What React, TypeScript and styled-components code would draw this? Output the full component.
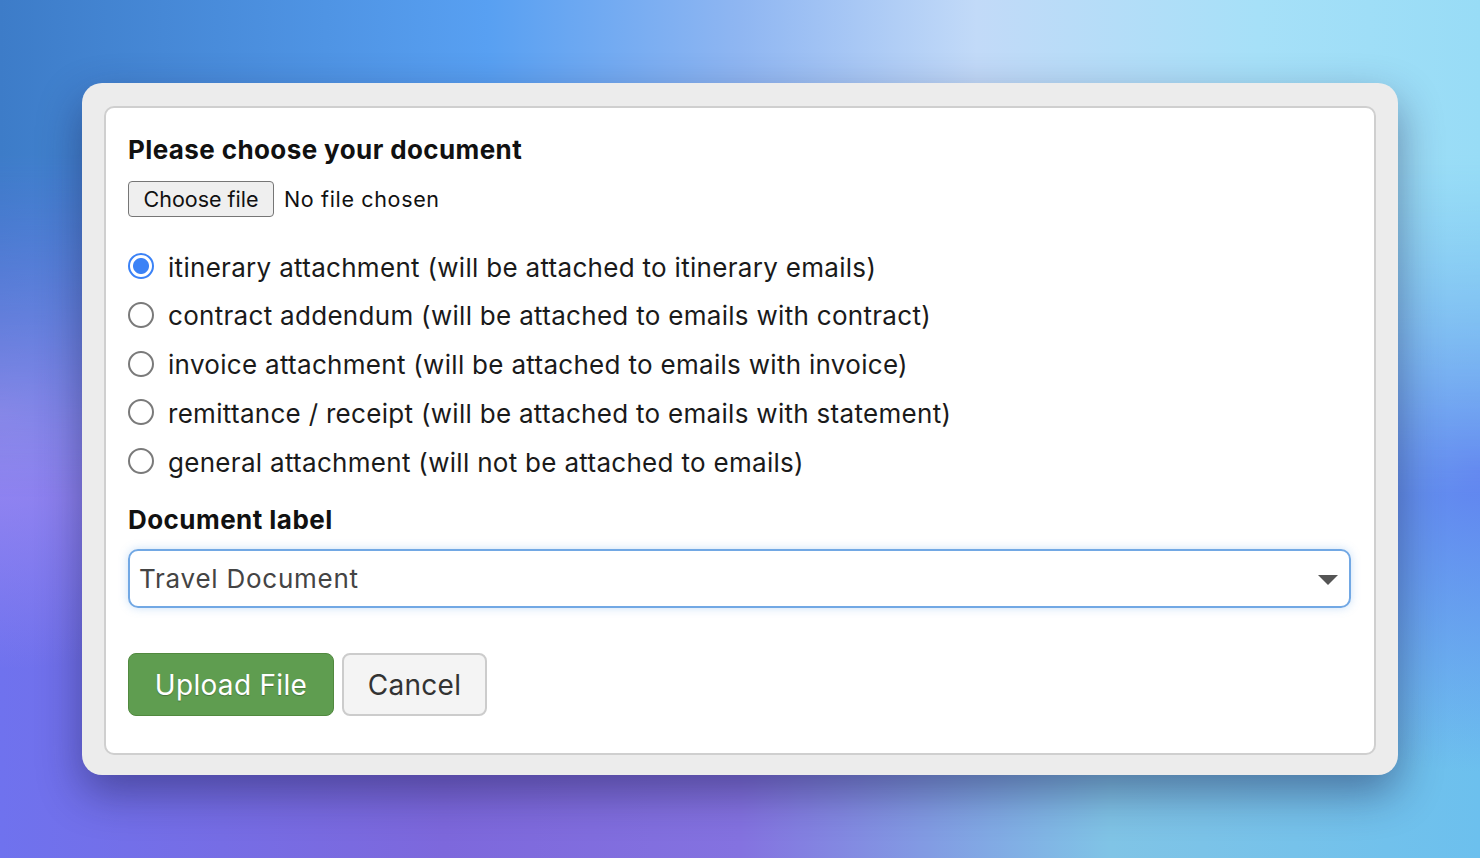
import React, { useState } from "react";
import styled, { createGlobalStyle } from "styled-components";

const Global = createGlobalStyle`
  html, body { margin: 0; padding: 0; height: 100%; }
  body { font-family: Inter, "Noto Sans", sans-serif; }
  * { box-sizing: border-box; }
`;

const Page = styled.main`
  position: relative;
  width: 100%;
  height: 858px;
  display: flex;
  align-items: center;
  justify-content: center;
  overflow: hidden;
  background:
    radial-gradient(ellipse 22% 30% at 0% 48%, rgba(160, 140, 242, 0.95) 0%, rgba(160, 140, 242, 0) 100%),
    radial-gradient(ellipse 22% 35% at 100% 55%, rgba(96, 128, 240, 0.95) 0%, rgba(96, 128, 240, 0) 100%),
    linear-gradient(to right, #6f72ee 0%, #7d68dc 30%, #8472e0 50%, #80c4e6 75%, #6cc0ee 100%);
  &::before {
    content: "";
    position: absolute;
    inset: 0;
    background: linear-gradient(to right, #3d7cc8 0%, #58a0f2 33%, #8fb6f2 50%, #c2daf8 66%, #a6e0f8 85%, #98dcf6 100%);
    -webkit-mask-image: linear-gradient(to bottom, #000 0%, #000 18%, transparent 58%);
    mask-image: linear-gradient(to bottom, #000 0%, #000 18%, transparent 58%);
  }
`;

const Card = styled.section`
  position: relative;
  width: 1316px;
  padding: 23px 22px 20px;
  background: #ececec;
  border-radius: 20px;
  box-shadow: 0 18px 44px rgba(25, 25, 70, 0.45);
`;

const Panel = styled.form`
  background: #fff;
  border: 2px solid #cfcfcf;
  border-radius: 10px;
  padding: 26px 23px 37px 22px;
  display: flex;
  flex-direction: column;
`;

const Heading = styled.h2`
  margin: 0;
  font-size: 26px;
  line-height: 32px;
  font-weight: 700;
  color: #111;
  letter-spacing: 0.4px;
`;

const FileRow = styled.div`
  display: flex;
  align-items: center;
  gap: 10px;
  margin-top: 15px;
`;

const FileButton = styled.button`
  height: 36px;
  width: 146px;
  padding: 0;
  font-family: Inter, sans-serif;
  font-size: 21.5px;
  color: #111;
  background: #efefef;
  border: 1.5px solid #767676;
  border-radius: 4px;
`;

const FileStatus = styled.span`
  font-size: 21.5px;
  letter-spacing: 0.65px;
  color: #111;
`;

const RadioList = styled.div`
  display: flex;
  flex-direction: column;
  margin-top: 26px;
`;

const RadioRow = styled.label`
  height: 48.75px;
  display: flex;
  align-items: center;
  gap: 14px;
  font-size: 26px;
  letter-spacing: 0.3px;
  color: #1a1a1a;
  cursor: pointer;
`;

const Radio = styled.input.attrs({ type: "radio" })`
  appearance: none;
  -webkit-appearance: none;
  margin: 0;
  width: 26px;
  height: 26px;
  flex: none;
  border-radius: 50%;
  border: 2px solid #7a7a7a;
  background: #fff;
  position: relative;
  top: -1px;
  &:checked {
    border: 2.5px solid #3b82f6;
    background: radial-gradient(circle, #3b82f6 0 7.5px, #fff 8.5px);
  }
`;

const FieldLabel = styled.h3`
  margin: 18px 0 0;
  font-size: 26px;
  line-height: 32px;
  font-weight: 700;
  color: #111;
  letter-spacing: 0.45px;
`;

const Select = styled.div`
  margin-top: 13px;
  height: 59px;
  border: 2px solid #72a8e4;
  border-radius: 10px;
  box-shadow: 0 0 10px rgba(102, 165, 233, 0.35);
  display: flex;
  align-items: center;
  justify-content: space-between;
  padding: 0 11px 0 9px;
  font-size: 26px;
  letter-spacing: 0.75px;
  color: #444;
`;

const Caret = styled.span`
  width: 0;
  height: 0;
  border-left: 10px solid transparent;
  border-right: 10px solid transparent;
  border-top: 10px solid #555;
  margin-top: 2px;
`;

const Actions = styled.div`
  display: flex;
  gap: 8px;
  margin-top: 45px;
`;

const Btn = styled.button<{ $primary?: boolean; $w: number }>`
  width: ${(p) => p.$w}px;
  height: 63px;
  padding: 0;
  white-space: nowrap;
  font-family: Inter, sans-serif;
  font-size: 28px;
  letter-spacing: 0.3px;
  border-radius: 8px;
  cursor: pointer;
  color: ${(p) => (p.$primary ? "#fff" : "#333")};
  background: ${(p) => (p.$primary ? "#5f9d50" : "#f4f4f4")};
  border: ${(p) => (p.$primary ? "1.5px solid #51893f" : "2px solid #cccccc")};
  text-shadow: ${(p) => (p.$primary ? "0 1px 1px rgba(0,0,0,0.25)" : "none")};
`;

const options = [
  "itinerary attachment (will be attached to itinerary emails)",
  "contract addendum (will be attached to emails with contract)",
  "invoice attachment (will be attached to emails with invoice)",
  "remittance / receipt (will be attached to emails with statement)",
  "general attachment (will not be attached to emails)",
];

export default function App() {
  const [sel, setSel] = useState(0);
  return (
    <>
      <Global />
      <Page>
        <Card>
          <Panel onSubmit={(e) => e.preventDefault()}>
            <Heading>Please choose your document</Heading>
            <FileRow>
              <FileButton type="button">Choose file</FileButton>
              <FileStatus>No file chosen</FileStatus>
            </FileRow>
            <RadioList>
              {options.map((o, i) => (
                <RadioRow key={i}>
                  <Radio name="doctype" checked={sel === i} onChange={() => setSel(i)} />
                  {o}
                </RadioRow>
              ))}
            </RadioList>
            <FieldLabel>Document label</FieldLabel>
            <Select>
              Travel Document
              <Caret />
            </Select>
            <Actions>
              <Btn $primary $w={206} type="submit">Upload File</Btn>
              <Btn $w={145} type="button">Cancel</Btn>
            </Actions>
          </Panel>
        </Card>
      </Page>
    </>
  );
}
